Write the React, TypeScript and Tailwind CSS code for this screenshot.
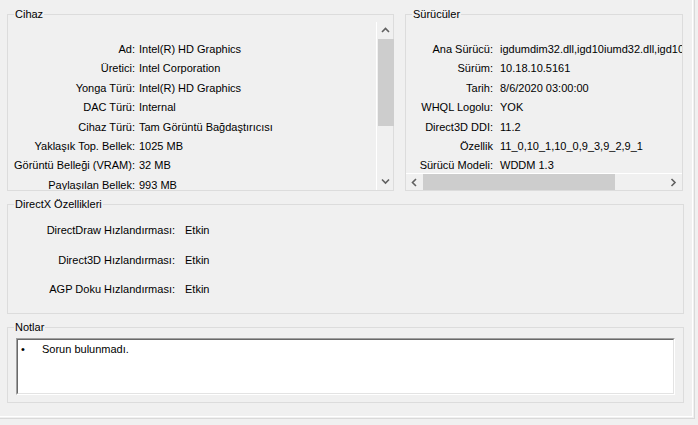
import type { ReactNode } from 'react';

// Ekran Bölümü sekmesi (dxdiag)

const cihaz = [
  ['Ad:', 'Intel(R) HD Graphics'],
  ['Üretici:', 'Intel Corporation'],
  ['Yonga Türü:', 'Intel(R) HD Graphics'],
  ['DAC Türü:', 'Internal'],
  ['Cihaz Türü:', 'Tam Görüntü Bağdaştırıcısı'],
  ['Yaklaşık Top. Bellek:', '1025 MB'],
  ['Görüntü Belleği (VRAM):', '32 MB'],
  ['Paylaşılan Bellek:', '993 MB'],
];

const suruculer = [
  ['Ana Sürücü:', 'igdumdim32.dll,igd10iumd32.dll,igd10iumd32.dll'],
  ['Sürüm:', '10.18.10.5161'],
  ['Tarih:', '8/6/2020 03:00:00'],
  ['WHQL Logolu:', 'YOK'],
  ['Direct3D DDI:', '11.2'],
  ['Özellik', '11_0,10_1,10_0,9_3,9_2,9_1'],
  ['Sürücü Modeli:', 'WDDM 1.3'],
];

const directx = [
  ['DirectDraw Hızlandırması:', 'Etkin'],
  ['Direct3D Hızlandırması:', 'Etkin'],
  ['AGP Doku Hızlandırması:', 'Etkin'],
];

function Group({ title, className, children }: { title: string; className: string; children: ReactNode }) {
  return (
    <fieldset className={`border border-[#dcdcdc] min-w-0 ${className}`}>
      <legend className="ml-[6px] px-[1px] text-[11px] leading-[15px] text-black">{title}</legend>
      {children}
    </fieldset>
  );
}

function Chevron({ dir }: { dir: 'up' | 'down' | 'left' | 'right' }) {
  const d = {
    up: 'M1 5 L4.5 1.5 L8 5',
    down: 'M1 1.5 L4.5 5 L8 1.5',
    left: 'M5 1 L1.5 4.5 L5 8',
    right: 'M1.5 1 L5 4.5 L1.5 8',
  }[dir];
  const vert = dir === 'up' || dir === 'down';
  return (
    <svg width={vert ? 9 : 7} height={vert ? 7 : 9} viewBox={vert ? '0 0 9 7' : '0 0 7 9'}>
      <path d={d} fill="none" stroke="#606060" strokeWidth="1.6" />
    </svg>
  );
}

export default function App() {
  return (
    <div className="w-[698px] h-[425px] bg-[#f0f0f0] overflow-hidden font-['Liberation_Sans',Arial,sans-serif] text-[11px] text-black">
      <div className="w-[695px] h-[419px] border-r border-b border-[#d9d9d9]">
        <div className="w-[693px] h-[417px] border-r border-b border-white pt-[7px] pl-[7px]">
          {/* Cihaz + Sürücüler */}
          <div className="flex gap-[11px]">
            <Group title="Cihaz" className="w-[387px] h-[184px]">
              <div className="flex h-[168px]">
                <div className="flex-1 overflow-hidden pt-[18px] leading-[19.4px]">
                  {cihaz.map(([k, v]) => (
                    <div key={k} className="flex whitespace-nowrap">
                      <span className="w-[127px] text-right">{k}</span>
                      <span className="ml-[4px]">{v}</span>
                    </div>
                  ))}
                </div>
                <div className="w-[17px] border-l border-white flex flex-col items-center">
                  <div className="h-[17px] flex items-center justify-center"><Chevron dir="up" /></div>
                  <div className="w-[16px] h-[87px] bg-[#cdcdcd] ml-[1px]" />
                  <div className="flex-1" />
                  <div className="h-[17px] flex items-center justify-center"><Chevron dir="down" /></div>
                </div>
              </div>
            </Group>

            <Group title="Sürücüler" className="w-[278px] h-[184px]">
              <div className="flex flex-col h-[168px]">
                <div className="flex-1 overflow-hidden pt-[18px] leading-[19.4px]">
                  {suruculer.map(([k, v]) => (
                    <div key={k} className="flex whitespace-nowrap">
                      <span className="w-[87px] shrink-0 text-right">{k}</span>
                      <span className="ml-[7px]">{v}</span>
                    </div>
                  ))}
                </div>
                <div className="h-[17px] border-t border-white flex items-center">
                  <div className="w-[17px] flex justify-center"><Chevron dir="left" /></div>
                  <div className="w-[192px] h-[16px] bg-[#cdcdcd]" />
                  <div className="flex-1" />
                  <div className="w-[17px] flex justify-center"><Chevron dir="right" /></div>
                </div>
              </div>
            </Group>
          </div>

          {/* DirectX Özellikleri */}
          <Group title="DirectX Özellikleri" className="w-[677px] h-[117px] mt-[6px]">
            <div className="pt-[4px] leading-[29.5px]">
              {directx.map(([k, v]) => (
                <div key={k} className="flex whitespace-nowrap">
                  <span className="w-[167px] text-right">{k}</span>
                  <span className="ml-[10px]">{v}</span>
                </div>
              ))}
            </div>
          </Group>

          {/* Notlar */}
          <Group title="Notlar" className="w-[677px] h-[83px] mt-[6px]">
            <div className="ml-[8px] mt-[3px] w-[659px] h-[57px] border border-t-[#a0a0a0] border-l-[#a0a0a0] border-b-white border-r-white">
              <div className="h-full border border-t-[#696969] border-l-[#696969] border-b-[#e3e3e3] border-r-[#e3e3e3] bg-white">
                <div className="flex items-center leading-[14px] pt-[2px]">
                  <span className="w-[24px] pl-[3px]">•</span>
                  <span>Sorun bulunmadı.</span>
                </div>
              </div>
            </div>
          </Group>
        </div>
      </div>
    </div>
  );
}
